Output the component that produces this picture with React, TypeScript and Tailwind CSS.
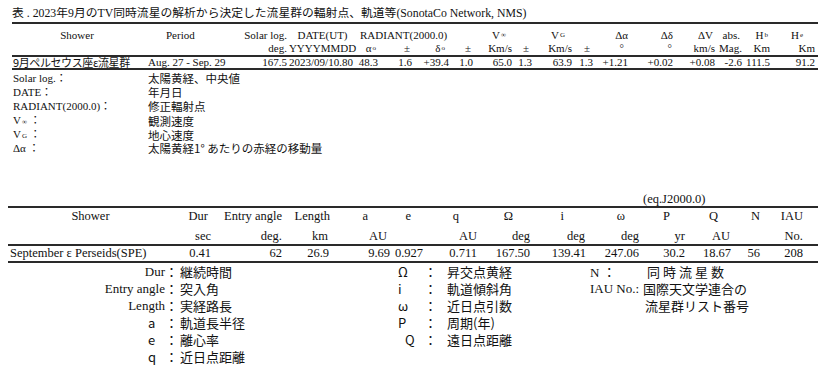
import type { ReactNode } from "react";

const serif = "font-['Liberation_Serif','Noto_Sans_CJK_JP',serif]";
const gothic = "font-['Noto_Sans_CJK_JP','Noto_Sans',sans-serif]";

const topCols =
  "grid grid-cols-[130px_94px_51px_71px_20px_34px_37px_24px_39px_20px_40px_21px_35px_45px_42px_27px_28px_45px]";
const bottomCols =
  "grid grid-cols-[157px_46px_72px_47px_62px_31px_54px_53px_56px_53px_46px_46px_29px_43px]";

const alignClass = {
  end: "justify-end",
  center: "justify-center",
  start: "justify-start",
};

const C = ({
  align = "end",
  className = "",
  children,
}: {
  align?: keyof typeof alignClass;
  className?: string;
  children?: ReactNode;
}) => <div className={`flex whitespace-nowrap ${alignClass[align]} ${className}`}>{children}</div>;

const Sub = ({ children }: { children: ReactNode }) => (
  <span className="ml-[1px] text-[7px]">{children}</span>
);

const Rule = () => <div className="h-[2px] bg-[#2a2a2a]" />;

const topLegend: [ReactNode, string][] = [
  ["Solar log.", "太陽黄経、中央値"],
  ["DATE", "年月日"],
  ["RADIANT(2000.0)", "修正輻射点"],
  [<>V<Sub>∞</Sub> </>, "観測速度"],
  [<>V<Sub>G</Sub> </>, "地心速度"],
  ["Δα ", "太陽黄経1° あたりの赤経の移動量"],
];

const leftLegend: { label: string; value: string; short?: boolean }[] = [
  { label: "Dur", value: "継続時間" },
  { label: "Entry angle", value: "突入角" },
  { label: "Length", value: "実経路長" },
  { label: "a", value: "軌道長半径", short: true },
  { label: "e", value: "離心率", short: true },
  { label: "q", value: "近日点距離", short: true },
];

const midLegend = [
  ["Ω", "昇交点黄経"],
  ["i", "軌道傾斜角"],
  ["ω", "近日点引数"],
  ["P", "周期(年)"],
  ["Q", "遠日点距離"],
];

export default function App() {
  return (
    <div className={`h-[387px] w-[818px] overflow-hidden bg-white text-[#111] ${serif}`}>
      {/* upper table */}
      <div className="pl-[12px] pt-[5px] text-[11px]">
        <div className="h-[16px] whitespace-nowrap text-[11.8px] leading-[16px]">
          表 . 2023年9月のTV同時流星の解析から決定した流星群の輻射点、軌道等(SonotaCo Network, NMS)
        </div>
        <div className="mt-[1px]">
          <Rule />
        </div>
        <div className={`${topCols} h-[18px] pt-[5px] leading-[13px]`}>
          <C align="center">Shower</C>
          <C align="start" className="pl-[24px]">
            Period
          </C>
          <C>Solar log.</C>
          <C align="center">DATE(UT)</C>
          <C align="start" className="col-span-3 pl-[2px]">
            RADIANT(2000.0)
          </C>
          <C />
          <C className="pr-[6px]">
            V<Sub>∞</Sub>
          </C>
          <C />
          <C className="pr-[7px]">
            V<Sub>G</Sub>
          </C>
          <C />
          <C>Δα</C>
          <C>Δδ</C>
          <C className="pr-[2px]">ΔV</C>
          <C className="pr-[2px]">abs.</C>
          <C className="pr-[2px]">
            H<Sub>b</Sub>
          </C>
          <C className="pr-[12px]">
            H<Sub>e</Sub>
          </C>
        </div>
        <div className={`${topCols} h-[13px] leading-[13px]`}>
          <C />
          <C />
          <C>deg.</C>
          <C align="center">YYYYMMDD</C>
          <C className="pr-[2px]">
            α<Sub>o</Sub>
          </C>
          <C className="pr-[2px]">±</C>
          <C className="pr-[4px]">
            δ<Sub>o</Sub>
          </C>
          <C className="pr-[2px]">±</C>
          <C>Km/s</C>
          <C className="pr-[3px]">±</C>
          <C>Km/s</C>
          <C className="pr-[3px]">±</C>
          <C className="pr-[4px]">°</C>
          <C className="pr-[1px]">°</C>
          <C>km/s</C>
          <C>Mag.</C>
          <C>Km</C>
          <C>Km</C>
        </div>
        <Rule />
        <div className={`${topCols} h-[11px] leading-[11px]`}>
          <C align="start" className={`pl-[1px] text-[11px] leading-[11px] tracking-[-0.4px] ${gothic}`}>
            9月ペルセウス座ε流星群
          </C>
          <C align="start" className="pl-[6px]">
            Aug. 27 - Sep. 29
          </C>
          <C>167.5</C>
          <C align="center" className="pr-[3px]">
            2023/09/10.80
          </C>
          <C>48.3</C>
          <C>1.6</C>
          <C>+39.4</C>
          <C>1.0</C>
          <C>65.0</C>
          <C>1.3</C>
          <C>63.9</C>
          <C>1.3</C>
          <C>+1.21</C>
          <C>+0.02</C>
          <C>+0.08</C>
          <C>-2.6</C>
          <C>111.5</C>
          <C>91.2</C>
        </div>
        <Rule />
      </div>

      {/* upper legend */}
      <div className="pl-[13px] text-[11px]">
        {topLegend.map(([label, value], i) => (
          <div key={i} className="grid h-[14px] grid-cols-[135px_1fr] items-center leading-[14px]">
            <div className="whitespace-nowrap">
              {label}
              <span className={gothic}>：</span>
            </div>
            <div className={`whitespace-nowrap text-[11.5px] ${gothic}`}>{value}</div>
          </div>
        ))}
      </div>

      {/* lower table */}
      <div className="mt-[38px] pl-[8px] text-[12.5px]">
        <div className="h-[14px] pl-[635px] leading-[14px]">(eq.J2000.0)</div>
        <Rule />
        <div className={`${bottomCols} h-[19px] pt-[1px] leading-[15px]`}>
          <C align="center" className="pl-[8px]">
            Shower
          </C>
          <C className="pr-[3px]">Dur</C>
          <C className="pr-[1px]">Entry angle</C>
          <C>Length</C>
          <C className="pr-[24px]">a</C>
          <C className="pr-[12px]">e</C>
          <C className="pr-[18px]">q</C>
          <C className="pr-[17px]">Ω</C>
          <C className="pr-[22px]">i</C>
          <C className="pr-[14px]">ω</C>
          <C className="pr-[15px]">P</C>
          <C className="pr-[13px]">Q</C>
          <C>N</C>
          <C>IAU</C>
        </div>
        <div className={`${bottomCols} h-[17px] pt-[2px] leading-[15px]`}>
          <C />
          <C>sec</C>
          <C className="pr-[1px]">deg.</C>
          <C className="pr-[2px]">km</C>
          <C className="pr-[5px]">AU</C>
          <C />
          <C>AU</C>
          <C>deg</C>
          <C className="pr-[1px]">deg</C>
          <C>deg</C>
          <C>yr</C>
          <C className="pr-[1px]">AU</C>
          <C />
          <C>No.</C>
        </div>
        <Rule />
        <div className={`${bottomCols} h-[15px] leading-[15px]`}>
          <C align="start" className="pl-[2px]">
            September ε Perseids(SPE)
          </C>
          <C>0.41</C>
          <C className="pr-[1px]">62</C>
          <C className="pr-[1px]">26.9</C>
          <C className="pr-[2px]">9.69</C>
          <C>0.927</C>
          <C>0.711</C>
          <C>167.50</C>
          <C>139.41</C>
          <C>247.06</C>
          <C>30.2</C>
          <C>18.67</C>
          <C>56</C>
          <C>208</C>
        </div>
        <Rule />
      </div>

      {/* lower legend */}
      <div className="flex text-[13px] leading-[17px]">
        <div className="w-[398px]">
          {leftLegend.map((r) => (
            <div key={r.label} className="grid h-[17px] grid-cols-[165px_15px_1fr]">
              <div className={r.short ? `pl-[148px] ${gothic}` : "text-right"}>{r.label}</div>
              <div className={gothic}>：</div>
              <div className={`whitespace-nowrap ${gothic}`}>{r.value}</div>
            </div>
          ))}
        </div>
        <div className={`w-[192px] ${gothic}`}>
          {midLegend.map(([sym, value]) => (
            <div key={sym} className="grid h-[17px] grid-cols-[26px_23px_1fr]">
              <div className={sym === "Q" ? "pl-[7px]" : ""}>{sym}</div>
              <div>：</div>
              <div className="whitespace-nowrap">{value}</div>
            </div>
          ))}
        </div>
        <div>
          <div className="grid h-[17px] grid-cols-[53px_1fr]">
            <div>
              N <span className={gothic}>：</span>
            </div>
            <div className={`pl-[4px] tracking-[3px] ${gothic}`}>同時流星数</div>
          </div>
          <div className="grid h-[17px] grid-cols-[53px_1fr]">
            <div className="whitespace-nowrap">IAU No.:</div>
            <div className={`whitespace-nowrap ${gothic}`}>国際天文学連合の</div>
          </div>
          <div className="grid h-[17px] grid-cols-[53px_1fr]">
            <div />
            <div className={`whitespace-nowrap pl-[2px] ${gothic}`}>流星群リスト番号</div>
          </div>
        </div>
      </div>
    </div>
  );
}
